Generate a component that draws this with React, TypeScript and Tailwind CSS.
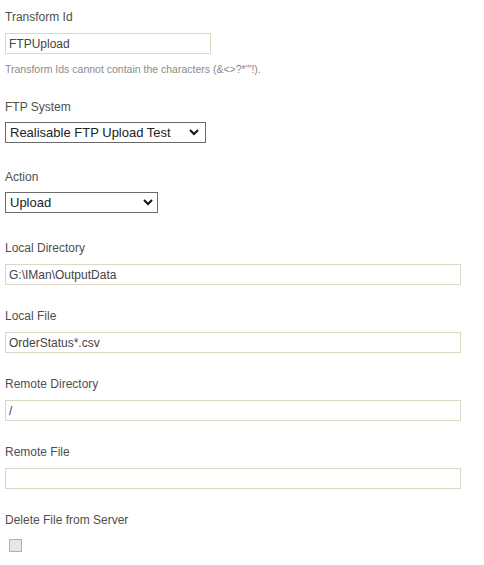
import React from "react";

function Label({ children, className = "" }: { children: React.ReactNode; className?: string }) {
  return (
    <div className={`text-[12px] leading-[14px] text-[#4f4f4f] ${className}`}>{children}</div>
  );
}

function TextInput({ value, w, className = "" }: { value: string; w: string; className?: string }) {
  return (
    <input
      readOnly
      value={value}
      className={`block h-[21px] ${w} border border-[#dcd7c4] bg-white px-[3px] text-[12px] text-[#444] outline-none font-['Liberation_Sans',Arial,sans-serif] ${className}`}
    />
  );
}

function Chevron() {
  return (
    <svg width="10" height="7" viewBox="0 0 10 7" className="block">
      <polyline points="1,1 5,5 9,1" fill="none" stroke="#111" strokeWidth="2" />
    </svg>
  );
}

export default function App() {
  return (
    <div className="min-h-[565px] bg-white pl-[5px] pt-[10px] font-['Liberation_Sans',Arial,sans-serif]">
      <Label>Transform Id</Label>
      <TextInput value="FTPUpload" w="w-[206px]" className="mt-[9px]" />
      <div className="mt-[9px] text-[10.5px] leading-[12px] text-[#8a8a8a]">
        Transform Ids cannot contain the characters (&amp;&lt;&gt;?*"'!).
      </div>

      <Label className="mt-[25px]">FTP System</Label>
      <div className="relative mt-[8px] flex h-[21px] w-[201px] items-center border border-[#6b6b6b] bg-white pl-[4px] text-[13px] text-[#222]">
        <span>Realisable FTP Upload Test</span>
        <span className="absolute right-[6px] top-[6px]">
          <Chevron />
        </span>
      </div>

      <Label className="mt-[27px]">Action</Label>
      <div className="relative mt-[8px] flex h-[21px] w-[153px] items-center border border-[#6b6b6b] bg-white pl-[4px] text-[13px] text-[#222]">
        <span>Upload</span>
        <span className="absolute right-[4px] top-[6px]">
          <Chevron />
        </span>
      </div>

      <Label className="mt-[28px]">Local Directory</Label>
      <TextInput value="G:\IMan\OutputData" w="w-[456px]" className="mt-[9px]" />

      <Label className="mt-[24px]">Local File</Label>
      <TextInput value="OrderStatus*.csv" w="w-[456px]" className="mt-[9px]" />

      <Label className="mt-[24px]">Remote Directory</Label>
      <TextInput value="/" w="w-[456px]" className="mt-[9px]" />

      <Label className="mt-[24px]">Remote File</Label>
      <TextInput value="" w="w-[456px]" className="mt-[9px]" />

      <Label className="mt-[24px]">Delete File from Server</Label>
      <div className="ml-[4px] mt-[12px] h-[13px] w-[13px] border border-[#b0b0b0] bg-[#e6e6e6]" />
    </div>
  );
}
